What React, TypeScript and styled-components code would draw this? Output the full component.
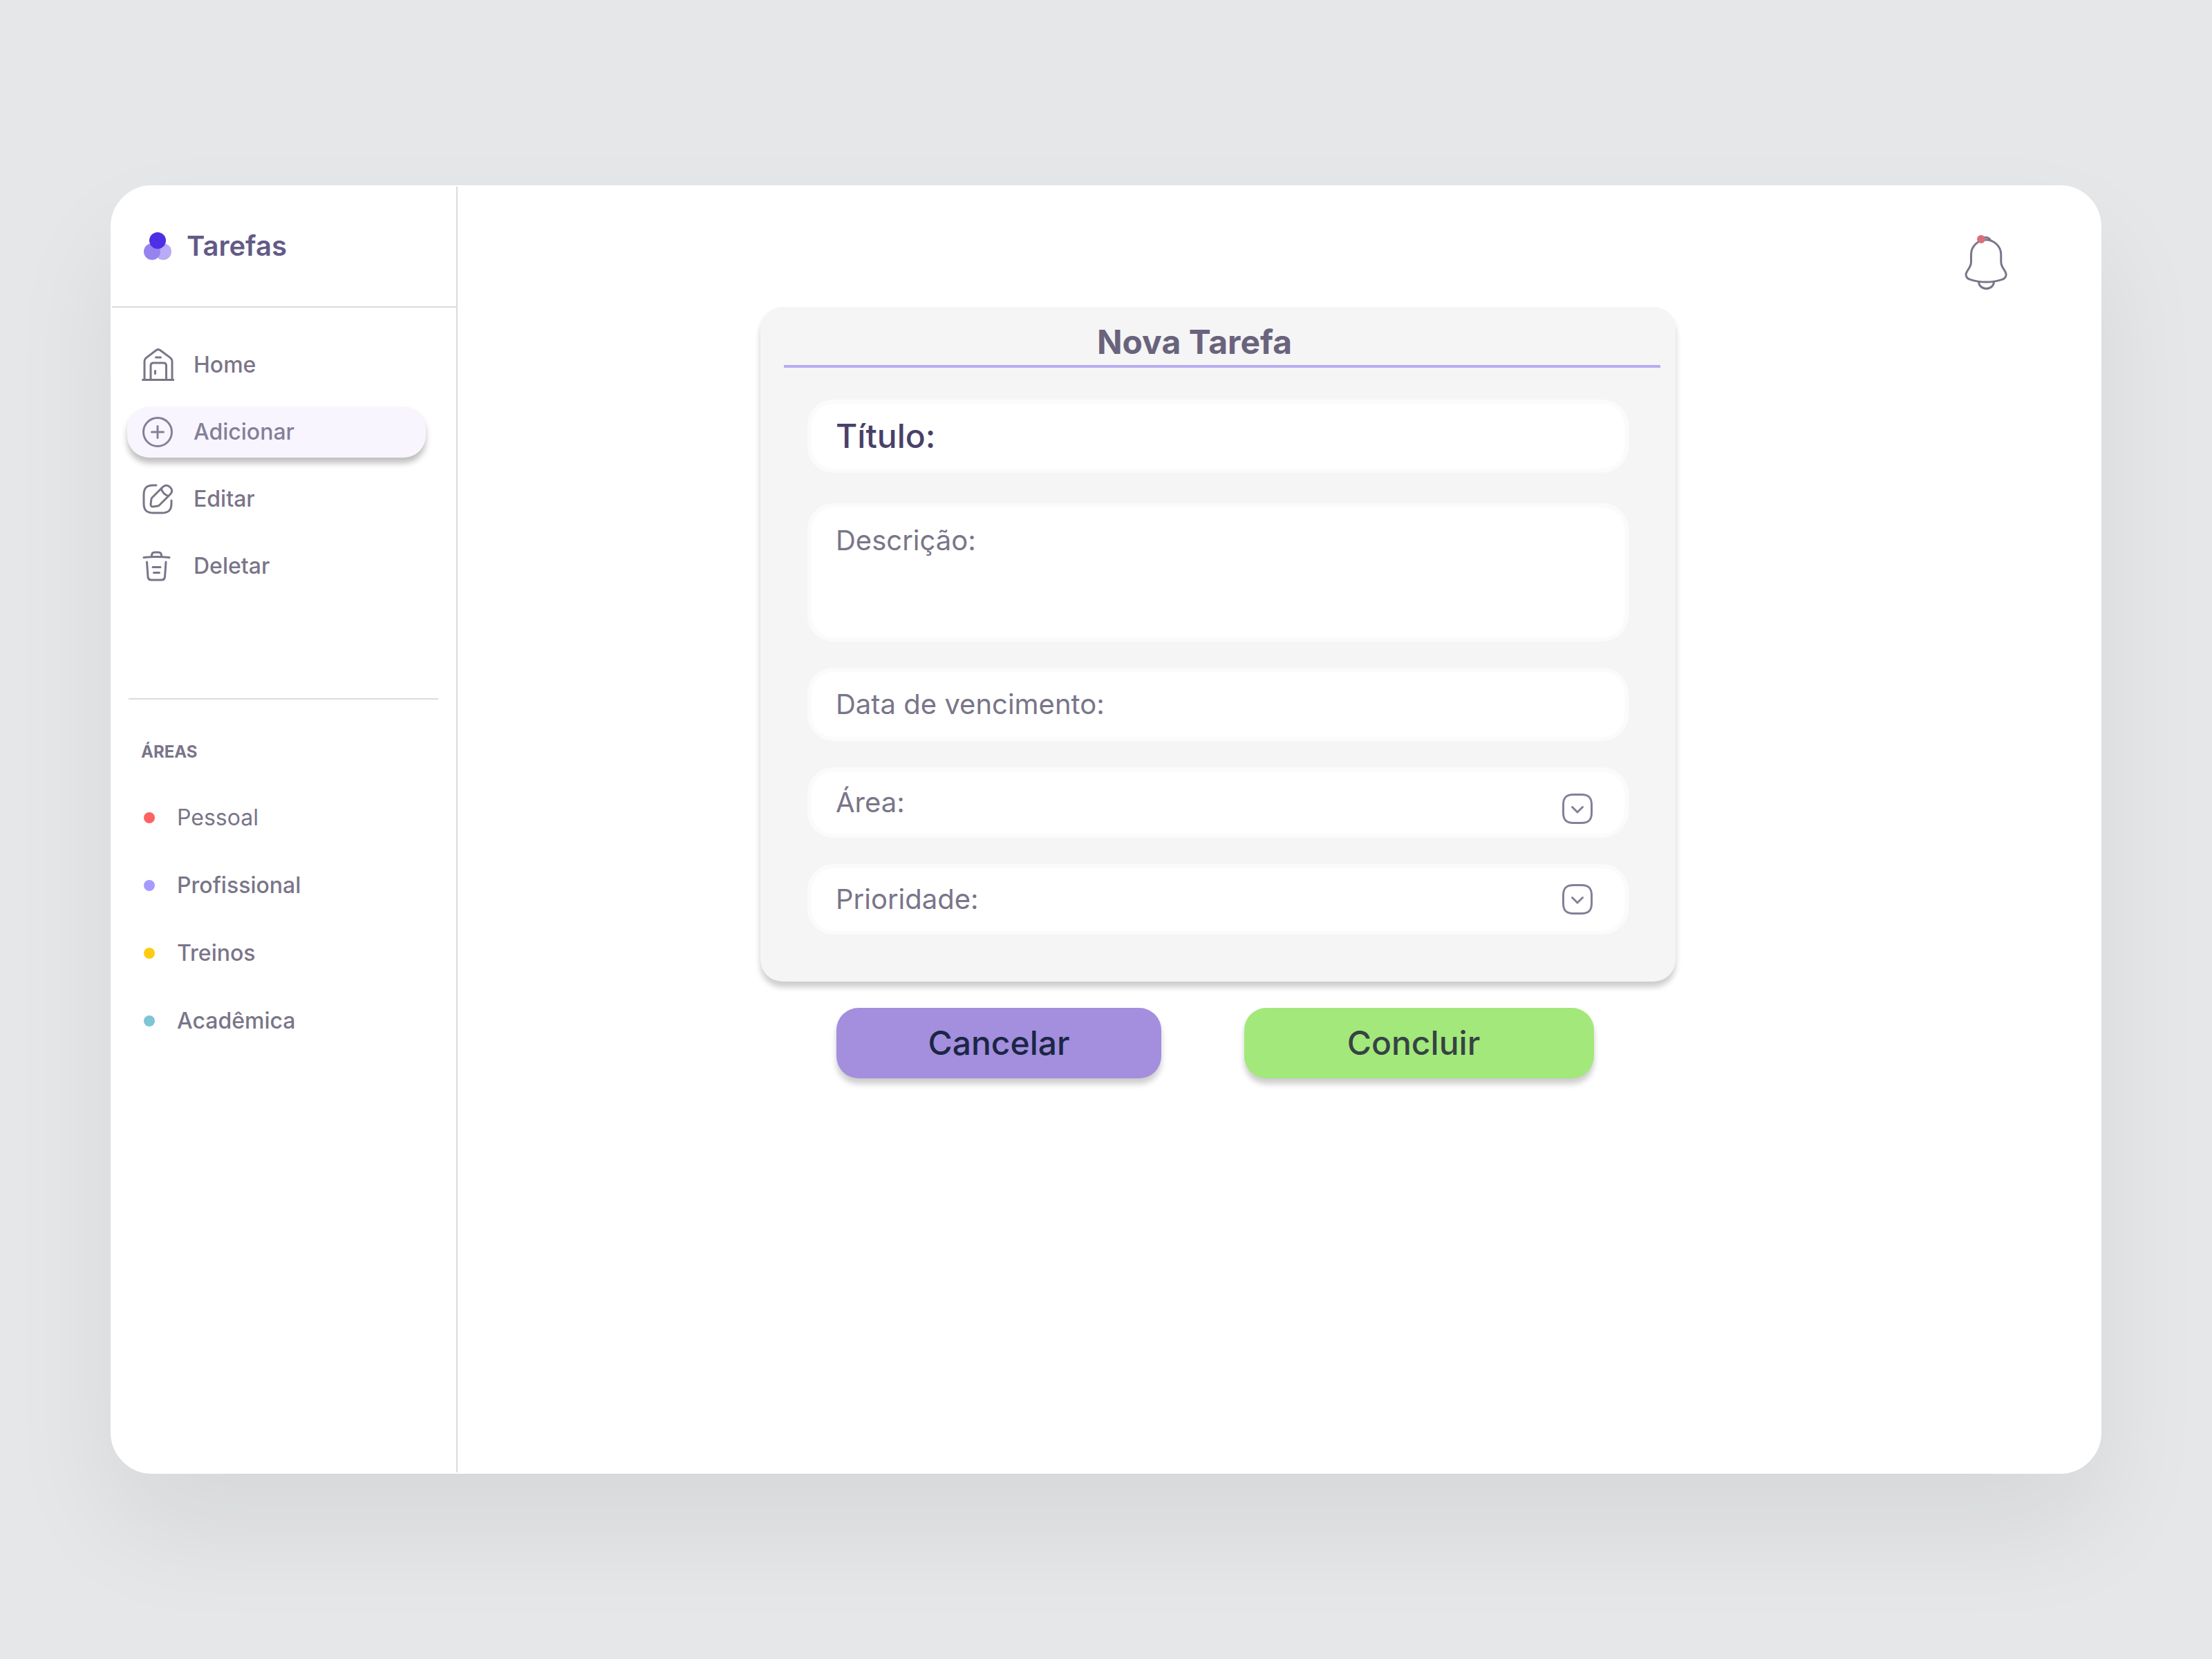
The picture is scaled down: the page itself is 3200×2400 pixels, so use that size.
import React from "react";
import styled, { createGlobalStyle } from "styled-components";

const GlobalStyle = createGlobalStyle`
  *, *::before, *::after { box-sizing: border-box; }
  body {
    margin: 0;
    background: #e6e7e9;
    font-family: Inter, "Liberation Sans", sans-serif;
    color: #7a7589;
  }
  h1, h2, ul { margin: 0; padding: 0; }
  ul { list-style: none; }
`;

const Page = styled.div`
  display: flex;
  min-height: 100vh;
  padding: 268px 160px;
`;

const Window = styled.div`
  flex: 1;
  display: flex;
  min-width: 0;
  border: 2px solid #ffffff;
  border-radius: 60px;
  background: #ffffff;
  box-shadow: 0 80px 160px rgba(0, 0, 0, 0.07);
`;

const Sidebar = styled.aside`
  flex: 0 0 500px;
  border-right: 2px solid #dbdbdb;
`;

const Brand = styled.header`
  display: flex;
  gap: 22px;
  height: 175px;
  padding: 62px 46px 0;
  border-bottom: 2px solid #dbdbdb;
`;

const BrandName = styled.h1`
  font-size: 40px;
  line-height: 48px;
  font-weight: 600;
  color: #635a87;
`;

const Logo = styled.svg`
  width: 40px;
  height: 40px;
  margin-top: 4px;
`;

const Nav = styled.nav`
  display: flex;
  flex-direction: column;
  gap: 23px;
  padding: 46px 44px 0 22px;
`;

const NavLink = styled.a<{ $active?: boolean }>`
  display: flex;
  align-items: center;
  gap: 28px;
  height: 74px;
  padding: 0 20px;
  border-radius: 32px;
  font-size: 32px;
  line-height: 40px;
  font-weight: 500;
  text-decoration: none;
  color: ${(p) => (p.$active ? "#857f98" : "#7a7589")};
  background: ${(p) => (p.$active ? "#f8f5ff" : "transparent")};
  box-shadow: ${(p) => (p.$active ? "0 8px 8px rgba(0, 0, 0, 0.25)" : "none")};
`;

const NavIcon = styled.svg`
  width: 48px;
  height: 48px;
  flex: none;
  fill: none;
  stroke: currentColor;
  stroke-width: 3;
  stroke-linecap: round;
  stroke-linejoin: round;
`;

const Divider = styled.hr`
  height: 2px;
  margin: 154px 26px 0 24px;
  border: 0;
  background: #dbdbdb;
`;

const Areas = styled.section`
  padding: 61px 42px 0;
`;

const AreasTitle = styled.h2`
  font-size: 24px;
  line-height: 30px;
  font-weight: 700;
`;

const AreaList = styled.ul`
  display: grid;
  gap: 58px;
  padding: 60px 0 0 4px;
`;

const AreaLink = styled.a<{ $light?: boolean }>`
  display: flex;
  align-items: center;
  gap: 32px;
  font-size: 32px;
  line-height: 40px;
  font-weight: ${(p) => (p.$light ? 400 : 500)};
  color: inherit;
  text-decoration: none;
`;

const Dot = styled.span<{ $color: string }>`
  width: 16px;
  height: 16px;
  border-radius: 50%;
  background: ${(p) => p.$color};
`;

const Main = styled.main`
  flex: 1;
  min-width: 0;
`;

const TopBar = styled.div`
  display: flex;
  justify-content: flex-end;
  height: 174px;
  padding: 66px 132px 0 0;
`;

const BellButton = styled.button`
  width: 66px;
  height: 84px;
  padding: 0;
  border: 0;
  background: none;
  color: #7a7589;
`;

const BellIcon = styled.svg`
  display: block;
  width: 66px;
  height: 84px;
`;

const Form = styled.form`
  max-width: 1324px;
  margin-left: 438px;
`;

const Card = styled.div`
  padding: 22px 22px 68px 34px;
  border-radius: 32px;
  background: #f5f5f5;
  box-shadow: 0 8px 8px rgba(0, 0, 0, 0.2);
`;

const CardTitle = styled.h2`
  padding: 0 80px 4px 0;
  border-bottom: 4px solid #b7adf1;
  font-size: 48px;
  line-height: 58px;
  font-weight: 700;
  text-align: center;
  color: #69637c;
`;

const Fields = styled.div`
  display: grid;
  gap: 38px;
  padding: 46px 46px 0 34px;
`;

const FieldGroup = styled.div`
  display: grid;
  gap: 44px;
`;

const fieldHeights = { text: 106, area: 200, select: 102 };

const Field = styled.div<{ $kind: "text" | "area" | "select" }>`
  display: flex;
  align-items: ${(p) => (p.$kind === "area" ? "flex-start" : "center")};
  gap: 16px;
  height: ${(p) => fieldHeights[p.$kind]}px;
  padding: ${(p) => (p.$kind === "area" ? 24 : 14)}px 46px ${(p) => (p.$kind === "area" ? 24 : 14)}px 35px;
  border: 6px solid #fbfbfb;
  border-radius: 38px;
  background: #ffffff;
`;

const Label = styled.label<{ $strong?: boolean }>`
  flex: none;
  font-size: ${(p) => (p.$strong ? 48 : 40)}px;
  line-height: 48px;
  font-weight: ${(p) => (p.$strong ? 500 : 400)};
  color: ${(p) => (p.$strong ? "#484169" : "#7a7589")};
`;

const TextInput = styled.input`
  flex: 1;
  min-width: 0;
  padding: 0;
  border: 0;
  outline: 0;
  background: none;
  color: inherit;
  font: 400 40px/48px Inter, sans-serif;
`;

const TextArea = styled.textarea`
  flex: 1;
  align-self: stretch;
  min-width: 0;
  padding: 0;
  border: 0;
  outline: 0;
  resize: none;
  background: none;
  color: inherit;
  font: 400 40px/48px Inter, sans-serif;
`;

const Select = styled.select`
  flex: 1;
  min-width: 0;
  height: 48px;
  padding: 0;
  border: 0;
  outline: 0;
  appearance: none;
  background: none;
  color: inherit;
  font: 400 40px/48px Inter, sans-serif;
`;

const Chevron = styled.svg<{ $low?: boolean }>`
  flex: none;
  align-self: ${(p) => (p.$low ? "flex-end" : "center")};
  width: 44px;
  height: 44px;
  fill: none;
  stroke: #857f98;
  stroke-width: 3;
  stroke-linecap: round;
  stroke-linejoin: round;
  pointer-events: none;
`;

const Actions = styled.div`
  display: grid;
  grid-template-columns: 470fr 506fr;
  gap: 120px;
  padding: 38px 118px 0 110px;
`;

const Action = styled.button<{ $kind: "cancel" | "done" }>`
  height: 102px;
  padding: 0 ${(p) => (p.$kind === "done" ? 16 : 0)}px 0 0;
  border: 0;
  border-radius: 32px;
  font: 500 48px/58px Inter, sans-serif;
  color: ${(p) => (p.$kind === "done" ? "#364344" : "#1a2745")};
  background: ${(p) => (p.$kind === "done" ? "#a3e87b" : "#a48ede")};
  box-shadow: 0 8px 8px rgba(0, 0, 0, 0.2);
`;

const ChevronBox = ({ low }: { low?: boolean }) => (
  <Chevron $low={low} viewBox="0 0 44 44" aria-hidden="true">
    <path d="M16 1.500H28C38 1.500 42.500 6 42.500 16V28C42.500 38 38 42.500 28 42.500H16C6 42.500 1.500 38 1.500 28V16C1.500 6 6 1.500 16 1.500Z" />
    <path d="M14.500 19.500L22 27L29.500 19.500" />
  </Chevron>
);

const navItems = [
  {
    label: "Home",
    icon: (
      <>
        <path d="M2.500 45.500H47" />
        <path d="M5 45V18.500C5 16.500 5.800 15 7.500 13.600L21.500 3C23.500 1.300 26.200 1.300 28.200 3L42.500 13.600C44.200 15 45 16.500 45 18.500V45" />
        <path d="M14 45V25C14 22.500 15.500 21 18 21H32.500C35 21 36.500 22.500 36.500 25V45" />
        <path d="M20.500 32.500V36.500M21.500 13H28.500" />
      </>
    ),
  },
  {
    label: "Adicionar",
    active: true,
    icon: (
      <>
        <circle cx="24" cy="24" r="20.500" />
        <path d="M15.500 24H32.500M24 15.500V32.500" />
      </>
    ),
  },
  {
    label: "Editar",
    icon: (
      <>
        <path d="M22 4H18C8 4 4 8 4 18V30C4 40 8 44 18 44H30C40 44 44 40 44 30V26" />
        <path d="M31.500 6.500L16.200 21.800C15.600 22.400 15 23.600 14.900 24.400L14 31.500C13.700 33.700 15.200 35.200 17.400 34.900L24 34C24.900 33.900 26 33.300 26.600 32.700L42.300 17C45 14.300 46.300 11 42.300 7C38.300 3 34.300 3.700 31.500 6.500Z" />
        <path d="M29.300 8.800C30.700 13.700 34.500 17.900 39.500 19.400" />
      </>
    ),
  },
  {
    label: "Deletar",
    icon: (
      <>
        <path d="M4 11.500C16.500 10.200 29 10.200 41 11.500" />
        <path d="M15.500 10.500V8.500C15.500 5.500 17 4 20 4H25C28 4 29.500 5.500 29.500 8.500V10.500" />
        <path d="M8.500 18L10 39.500C10.300 42.500 12 44 15 44H29.500C32.500 44 34.200 42.500 34.500 39.500L36 18" />
        <path d="M17 25.500H28M18.500 33.500H26.500" />
      </>
    ),
  },
];

const areas = [
  { label: "Pessoal", color: "#ff6262", light: true },
  { label: "Profissional", color: "#a59bff" },
  { label: "Treinos", color: "#ffcb14" },
  { label: "Acadêmica", color: "#7cc6d6" },
];

export default function App() {
  return (
    <>
      <GlobalStyle />
      <Page>
        <Window>
          <Sidebar>
            <Brand>
              <Logo viewBox="0 0 40 40" aria-hidden="true">
                <circle cx="28" cy="28" r="12" fill="#b9abf5" />
                <circle cx="12" cy="28" r="12" fill="#9783ef" />
                <circle cx="20" cy="12" r="12" fill="#4f2fe6" />
              </Logo>
              <BrandName>Tarefas</BrandName>
            </Brand>
            <Nav>
              {navItems.map((item) => (
                <NavLink key={item.label} href="#" $active={item.active}>
                  <NavIcon viewBox="0 0 48 48" aria-hidden="true">
                    {item.icon}
                  </NavIcon>
                  {item.label}
                </NavLink>
              ))}
            </Nav>
            <Divider />
            <Areas>
              <AreasTitle>ÁREAS</AreasTitle>
              <AreaList>
                {areas.map((area) => (
                  <li key={area.label}>
                    <AreaLink href="#" $light={area.light}>
                      <Dot $color={area.color} />
                      {area.label}
                    </AreaLink>
                  </li>
                ))}
              </AreaList>
            </Areas>
          </Sidebar>
          <Main>
            <TopBar>
              <BellButton type="button" aria-label="Notificações">
                <BellIcon viewBox="0 0 66 84" fill="none" stroke="currentColor" strokeWidth="3" strokeLinecap="round">
                  <path d="M33 11C21 11 11.500 20.500 11.500 32.500V43C11.500 45.200 10.600 48.400 9.500 50.300L5.300 57.300C2.700 61.700 4.500 66.500 9.300 68.100C25 73.300 41.500 73.300 57 68.100C61.500 66.600 63.500 61.500 61 57.300L56.800 50.300C55.700 48.400 54.800 45.200 54.800 43V32.500C54.800 20.600 45 11 33 11Z" />
                  <path d="M39.500 11.500C38 8.500 35.500 7.500 32.500 7.500C30 7.500 28 8.500 27 11.500" />
                  <path d="M22.500 71.500C22.500 77.500 27.500 81.500 33.500 81.500C39.500 81.500 44.500 77.500 44.500 71.500" />
                  <circle cx="26" cy="10" r="6" fill="#d96f7d" stroke="none" />
                </BellIcon>
              </BellButton>
            </TopBar>
            <Form>
              <Card>
                <CardTitle>Nova Tarefa</CardTitle>
                <Fields>
                  <FieldGroup>
                    <Field $kind="text">
                      <Label htmlFor="titulo" $strong>Título:</Label>
                      <TextInput id="titulo" type="text" />
                    </Field>
                    <Field $kind="area">
                      <Label htmlFor="descricao">Descrição:</Label>
                      <TextArea id="descricao" />
                    </Field>
                  </FieldGroup>
                  <Field $kind="text">
                    <Label htmlFor="vencimento">Data de vencimento:</Label>
                    <TextInput id="vencimento" type="text" />
                  </Field>
                  <Field $kind="select">
                    <Label htmlFor="area">Área:</Label>
                    <Select id="area" defaultValue="">
                      <option value="" />
                      {areas.map((area) => (
                        <option key={area.label}>{area.label}</option>
                      ))}
                    </Select>
                    <ChevronBox low />
                  </Field>
                  <Field $kind="select">
                    <Label htmlFor="prioridade">Prioridade:</Label>
                    <Select id="prioridade" defaultValue="">
                      <option value="" />
                      <option>Alta</option>
                      <option>Média</option>
                      <option>Baixa</option>
                    </Select>
                    <ChevronBox />
                  </Field>
                </Fields>
              </Card>
              <Actions>
                <Action type="button" $kind="cancel">Cancelar</Action>
                <Action type="submit" $kind="done">Concluir</Action>
              </Actions>
            </Form>
          </Main>
        </Window>
      </Page>
    </>
  );
}
